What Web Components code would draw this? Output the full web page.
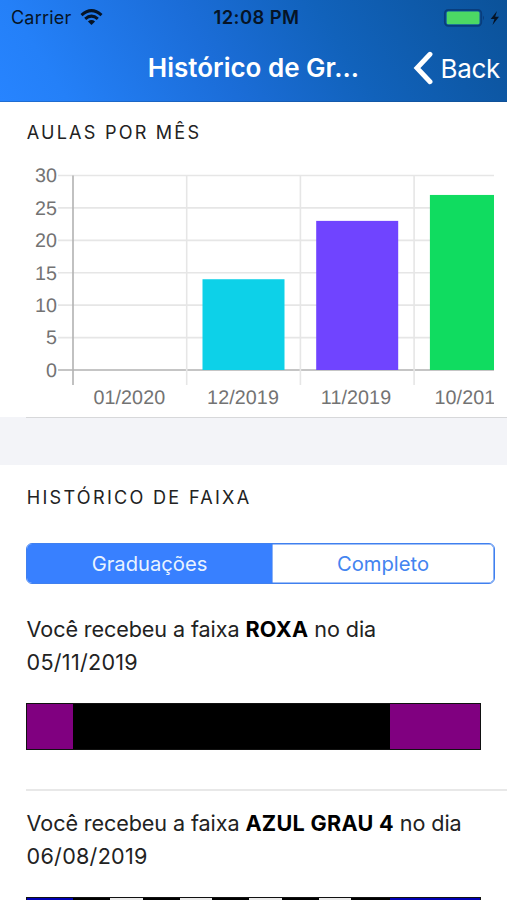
<!DOCTYPE html>
<html lang="pt-BR">
<head>
<meta charset="utf-8">
<meta name="viewport" content="width=device-width, initial-scale=1">
<title>Histórico de Graduações</title>
<style>
body {
    margin: 0;
    height: 900px;
    overflow: hidden;
    background: #fff;
    font-family: Inter, "Noto Sans", sans-serif;
    color: #222;
}
</style>
</head>
<body>
<history-page>
    <app-header slot="header" carrier="Carrier" time="12:08 PM" back="Back">Histórico de Gr...</app-header>
    <page-section>
        <span slot="title">AULAS POR MÊS</span>
        <classes-chart></classes-chart>
    </page-section>
    <section-gap></section-gap>
    <page-section>
        <span slot="title">HISTÓRICO DE FAIXA</span>
        <segment-bar first="Graduações" second="Completo"></segment-bar>
        <belt-item name="ROXA" date="05/11/2019" color="#800080" stripes="0"></belt-item>
        <belt-item name="AZUL GRAU 4" date="06/08/2019" color="#0000b4" stripes="4"></belt-item>
    </page-section>
</history-page>

<script>
class HistoryPage extends HTMLElement {
    constructor(){
        super();
        this.attachShadow({mode: "open"}).innerHTML = `
            <style>
            :host {
                display: flex;
                flex-direction: column;
                width: 507px;
                height: 900px;
                overflow: hidden;
            }
            </style>
            <slot name="header"></slot>
            <slot></slot>`;
    }
}

class AppHeader extends HTMLElement {
    connectedCallback(){
        this.attachShadow({mode: "open"}).innerHTML = `
            <style>
            :host {
                display: block;
                flex: none;
                height: 102px;
                background: linear-gradient(58deg, #2784ff 0%, #2480f8 12%, #1b6dd8 42%, #1162bb 66%, #0b5299 100%);
                box-shadow: inset 0 -1px rgba(20, 70, 130, 0.35);
            }
            .status, .bar {
                display: grid;
                grid-template-columns: 1fr auto 1fr;
                align-items: center;
            }
            .status {
                height: 34px;
                color: #061426;
                font-size: 18px;
                line-height: 35px;
            }
            .carrier {
                display: flex;
                align-items: center;
                gap: 9px;
                padding-left: 11px;
                letter-spacing: 0.2px;
            }
            .time {
                font-size: 18.4px;
                font-weight: 600;
                letter-spacing: 0.45px;
                padding-left: 6px;
            }
            .battery {
                justify-self: end;
                display: flex;
                padding-right: 6px;
            }
            .bar {
                height: 66px;
                color: #fff;
            }
            h1 {
                grid-column: 2;
                margin: 0;
                font-size: 26px;
                font-weight: 600;
                line-height: 68px;
                white-space: nowrap;
            }
            .back {
                justify-self: end;
                display: flex;
                align-items: center;
                gap: 7px;
                padding-right: 7px;
                font-size: 26px;
                letter-spacing: -0.3px;
            }
            svg { display: block; }
            </style>
            <div class="status">
                <div class="carrier">
                    <span>${this.getAttribute("carrier")}</span>
                    <svg width="23" height="17" viewBox="0 0 23 17">
                        <g fill="none" stroke="#061426" stroke-width="3">
                            <path d="M1.5 6.1Q11.5 -2.8 21.5 6.1"/>
                            <path d="M5.2 9.9Q11.5 4.3 17.8 9.9"/>
                        </g>
                        <path d="M7.9 12.4Q11.5 9.5 15.1 12.4L11.5 16Z" fill="#061426"/>
                    </svg>
                </div>
                <span class="time">${this.getAttribute("time")}</span>
                <div class="battery">
                    <svg width="58" height="20" viewBox="0 0 58 20">
                        <rect x="1.8" y="1.8" width="36.5" height="16" rx="3.5" fill="none" stroke="#093d7c" stroke-width="1.7"/>
                        <rect x="3.7" y="3.6" width="32.8" height="12.6" rx="1.5" fill="#4cd964"/>
                        <path d="M40 7.5q2 2.3 0 4.8z" fill="#093d7c"/>
                        <path d="M54 3L47.7 11H51.4L49.5 17L56 8.8H52.2Z" fill="#061426"/>
                    </svg>
                </div>
            </div>
            <div class="bar">
                <h1><slot></slot></h1>
                <div class="back">
                    <svg width="20" height="34" viewBox="0 0 20 34">
                        <path d="M17 3.3L4 17L17 30.7" fill="none" stroke="#fff" stroke-width="4.9" stroke-linecap="round" stroke-linejoin="miter"/>
                    </svg>
                    <span>${this.getAttribute("back")}</span>
                </div>
            </div>`;
    }
}

class PageSection extends HTMLElement {
    constructor(){
        super();
        this.attachShadow({mode: "open"}).innerHTML = `
            <style>
            :host {
                display: block;
                flex: none;
                padding-left: 26px;
            }
            h2 {
                margin: 0;
                height: 62px;
                font-size: 18.1px;
                font-weight: 400;
                line-height: 61px;
                letter-spacing: 2.2px;
                text-indent: 0.7px;
                white-space: nowrap;
            }
            :host(:last-of-type) h2 {
                line-height: 65px;
                letter-spacing: 2.28px;
            }
            </style>
            <h2><slot name="title"></slot></h2>
            <slot></slot>`;
    }
}

class SectionGap extends HTMLElement {
    constructor(){
        super();
        this.attachShadow({mode: "open"}).innerHTML = `
            <style>
            :host {
                display: block;
                flex: none;
                height: 48px;
                background: #f3f4f8;
            }
            div {
                height: 1px;
                margin-left: 26px;
                background: #d7d8da;
            }
            </style>
            <div></div>`;
    }
}

class ClassesChart extends HTMLElement {
    constructor(){
        super();
        this.attachShadow({mode: "open"});
        this.data = [
            {label: "01/2020", value: 0, color: "#fff"},
            {label: "12/2019", value: 14, color: "#0dd1e8"},
            {label: "11/2019", value: 23, color: "#7044ff"},
            {label: "10/201", value: 27, color: "#10dc60"}
        ];
        this.render();
    }

    render(){
        const left = 47;
        const top = 11.5;
        const base = 206;
        const step = 113.7;
        const unit = (base - top) / 30;
        let grid = "";
        let bars = "";

        for (let v = 0; v <= 30; v += 5) {
            const y = base - v * unit;
            const color = v === 0 ? "#b2b2b2" : "#e6e6e6";
            grid += `<path d="M32 ${y}H468" stroke="${color}"/>
                <text x="31" y="${y + 6.8}" text-anchor="end">${v}</text>`;
        }
        this.data.forEach((item, i) => {
            const x = left + i * step;
            // labels start at the same inset, so the last one runs up to the clip edge
            grid += `<path d="M${x} ${top}V221" stroke="${i ? "#e6e6e6" : "#b2b2b2"}"/>
                <text x="${x + 20.4}" y="240">${item.label}</text>`;
            if (item.value) {
                bars += `<rect x="${x + 15.8}" y="${base - item.value * unit}" width="82" height="${item.value * unit}" fill="${item.color}"/>`;
            }
        });

        this.shadowRoot.innerHTML = `
            <style>
            :host {
                display: block;
                height: 253px;
            }
            svg {
                display: block;
                overflow: hidden;
            }
            path {
                stroke-width: 1.6;
            }
            text {
                font-family: "Liberation Sans", Arial, sans-serif;
                font-size: 19.7px;
                letter-spacing: 0.1px;
                fill: #737373;
                text-rendering: geometricPrecision;
            }
            </style>
            <svg width="468" height="253">${grid}${bars}</svg>`;
    }
}

class SegmentBar extends HTMLElement {
    connectedCallback(){
        this.attachShadow({mode: "open"}).innerHTML = `
            <style>
            :host {
                display: flex;
                box-sizing: border-box;
                width: 469px;
                height: 41px;
                margin: 16px 0 13px;
                border: 1px solid #4080ef;
                border-radius: 6px;
                overflow: hidden;
                font-size: 20.2px;
                line-height: 39px;
                text-align: center;
                color: #4384f0;
            }
            .active {
                width: 245px;
                background: #3880ff;
                color: #e9f3ff;
            }
            .rest {
                flex: 1;
                border-radius: 0 5px 5px 0;
                box-shadow: inset 0 0 0 0.6px #4080ef;
            }
            </style>
            <div class="active">${this.getAttribute("first")}</div>
            <div class="rest">${this.getAttribute("second")}</div>`;
    }
}

class BeltItem extends HTMLElement {
    connectedCallback(){
        const stripes = Number(this.getAttribute("stripes"));
        this.attachShadow({mode: "open"}).innerHTML = `
            <style>
            :host {
                display: block;
                box-sizing: border-box;
                height: 194px;
                padding-top: 16px;
                border-bottom: 2px solid #e8e8e8;
            }
            p {
                margin: 0 0 24px;
                padding-left: 0.6px;
                font-size: 21.6px;
                line-height: 33px;
                letter-spacing: -0.1px;
                white-space: nowrap;
            }
            b {
                font-weight: 700;
                letter-spacing: 0.3px;
                color: #000;
            }
            .date { letter-spacing: 0.25px; }
            .belt {
                display: flex;
                box-sizing: border-box;
                width: 455px;
                height: 47px;
                border: 1px solid #111;
                background: ${this.getAttribute("color")};
            }
            .tip {
                display: flex;
                gap: 37px;
                box-sizing: border-box;
                width: 317px;
                margin-left: 46px;
                padding-left: 37px;
                background: #000;
            }
            i {
                width: 32.6px;
                background: #eaeaea;
            }
            </style>
            <p>Você recebeu a faixa <b>${this.getAttribute("name")}</b> no dia<br><span class="date">${this.getAttribute("date")}</span></p>
            <div class="belt"><div class="tip">${"<i></i>".repeat(stripes)}</div></div>`;
    }
}

customElements.define("history-page", HistoryPage);
customElements.define("app-header", AppHeader);
customElements.define("page-section", PageSection);
customElements.define("section-gap", SectionGap);
customElements.define("classes-chart", ClassesChart);
customElements.define("segment-bar", SegmentBar);
customElements.define("belt-item", BeltItem);
</script>
</body>
</html>
